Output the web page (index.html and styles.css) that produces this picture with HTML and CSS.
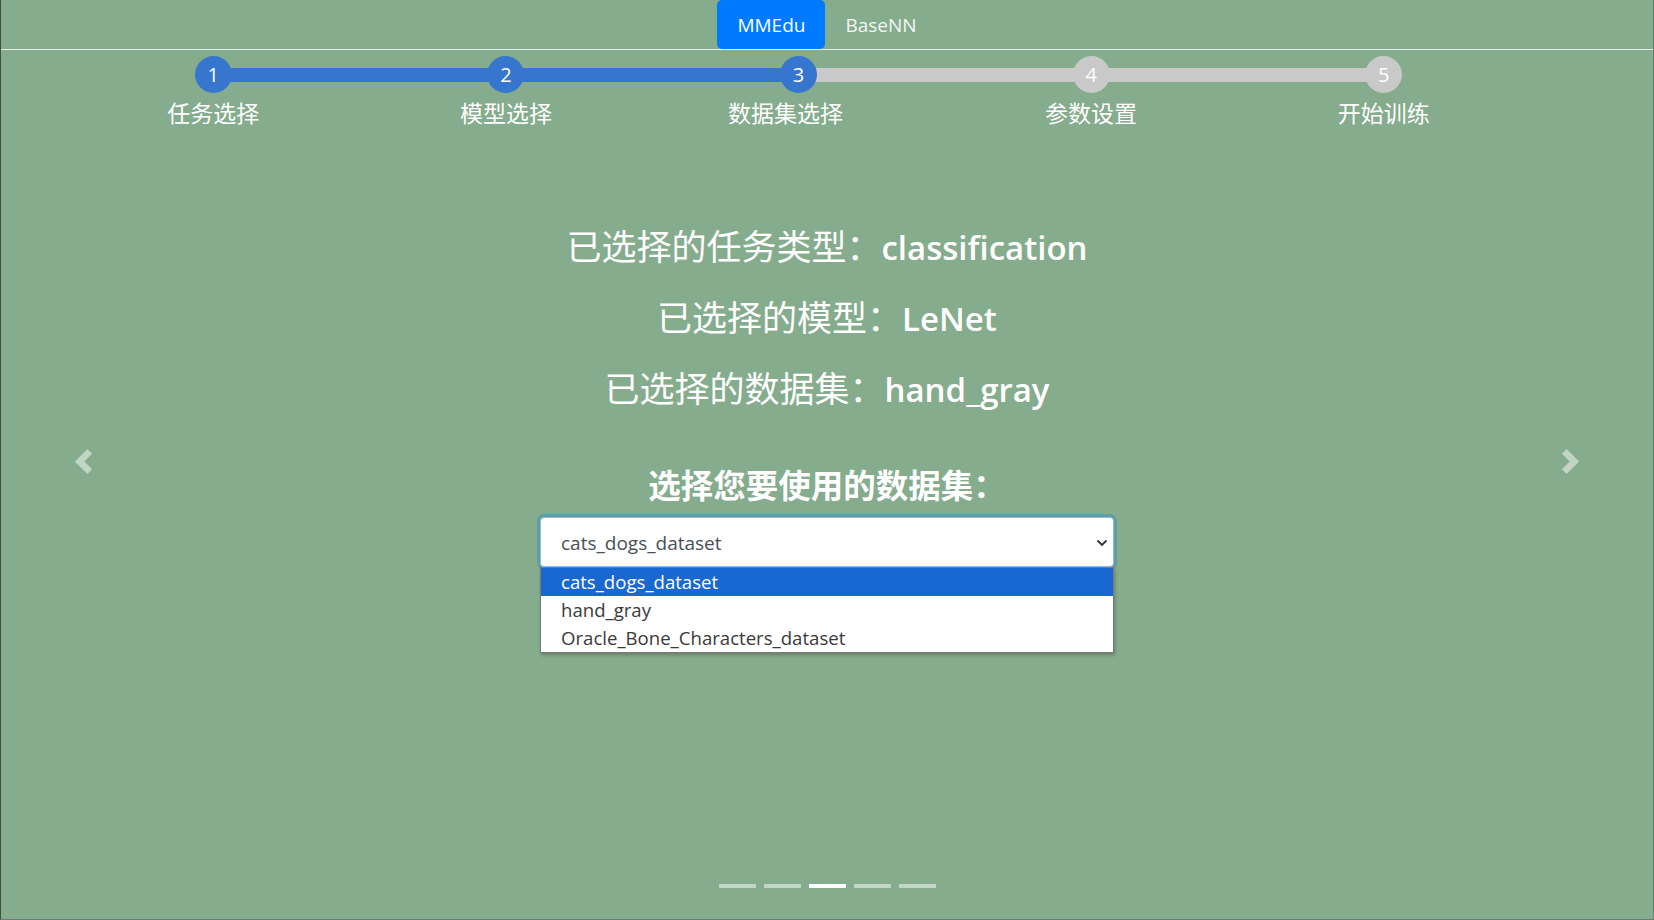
FILE: index.html
```html
<!DOCTYPE html>
<html lang="zh-CN">
<head>
<meta charset="utf-8">
<title>MMEdu</title>
<link rel="stylesheet" href="styles.css">
</head>
<body>
  <nav class="topnav">
    <a class="tab active">MMEdu</a>
    <a class="tab">BaseNN</a>
  </nav>

  <div class="carousel">
    <div class="stepper">
      <div class="step done"><span class="dot">1</span><span class="label">任务选择</span></div>
      <div class="step done"><span class="dot">2</span><span class="label">模型选择</span></div>
      <div class="step done"><span class="dot">3</span><span class="label label-shift">数据集选择</span></div>
      <div class="step"><span class="dot">4</span><span class="label">参数设置</span></div>
      <div class="step"><span class="dot">5</span><span class="label">开始训练</span></div>
    </div>

    <div class="slide">
      <div class="info">
        <p class="info-line">已选择的任务类型：<b>classification</b></p>
        <p class="info-line">已选择的模型：<b>LeNet</b></p>
        <p class="info-line">已选择的数据集：<b>hand_gray</b></p>
      </div>
      <h3 class="pick-title">选择您要使用的数据集：</h3>
      <div class="picker">
        <div class="select">
          <span class="select-value">cats_dogs_dataset</span>
          <svg class="caret" width="12" height="8" viewBox="0 0 12 8"><path d="M1.5 1.5 L6 6 L10.5 1.5" fill="none" stroke="#333" stroke-width="1.8"/></svg>
        </div>
        <ul class="options">
          <li class="opt selected">cats_dogs_dataset</li>
          <li class="opt">hand_gray</li>
          <li class="opt">Oracle_Bone_Characters_dataset</li>
        </ul>
      </div>
    </div>

    <a class="ctrl prev"><svg width="25" height="25" viewBox="0 0 8 8"><path d="M5.25 0l-4 4 4 4 1.5-1.5L4.25 4l2.5-2.5L5.25 0z" fill="#fff"/></svg></a>
    <a class="ctrl next"><svg width="25" height="25" viewBox="0 0 8 8"><path d="M2.75 0l-1.5 1.5L3.75 4l-2.5 2.5L2.75 8l4-4-4-4z" fill="#fff"/></svg></a>

    <ol class="indicators">
      <li></li>
      <li></li>
      <li class="active"></li>
      <li></li>
      <li></li>
    </ol>
  </div>
</body>
</html>
```

FILE: styles.css
```css
* { box-sizing: border-box; }

html, body {
  margin: 0;
  padding: 0;
}

body {
  width: 1654px;
  height: 920px;
  overflow: hidden;
  background: #85ac8c;
  font-family: "Open Sans", "Noto Sans CJK SC", sans-serif;
  color: #fff;
  display: flex;
  flex-direction: column;
  border-left: 1px solid #3f4f45;
  border-right: 1px solid #6b7d70;
  border-bottom: 1px solid #6b7d70;
}

.topnav {
  height: 50px;
  border-bottom: 1px solid #e4efe6;
  display: flex;
  justify-content: center;
  flex-shrink: 0;
}

.tab {
  display: flex;
  align-items: center;
  height: 49px;
  padding: 1px 20px 0;
  font-size: 19px;
  color: #f4f6f4;
  border-radius: 5px;
}

.tab.active {
  background: #007bff;
  color: #fff;
}

.carousel {
  position: relative;
  flex: 1;
  display: flex;
  flex-direction: column;
}

.stepper {
  margin-top: 6px;
  margin-left: 66px;
  width: 1463px;
  display: grid;
  grid-template-columns: repeat(5, 1fr);
}

.step {
  position: relative;
  display: flex;
  flex-direction: column;
  align-items: center;
}

.step + .step::before {
  content: "";
  position: absolute;
  top: 12px;
  left: -50%;
  width: 100%;
  height: 14px;
  background: #c9c9c9;
  z-index: 0;
}

.step.done + .step.done::before {
  background: #3776cf;
}

.dot {
  position: relative;
  z-index: 1;
  width: 37px;
  height: 37px;
  border-radius: 50%;
  background: #c9c9c9;
  color: #fff;
  font-size: 20px;
  line-height: 37px;
  text-align: center;
}

.step.done .dot {
  background: #3776cf;
}

.label {
  margin-top: 5px;
  font-size: 23px;
  line-height: 30px;
  white-space: nowrap;
}

.label-shift {
  margin-right: 26px;
}

.slide {
  display: flex;
  flex-direction: column;
  align-items: center;
}

.info {
  margin-top: 84px;
  text-align: center;
}

.info-line {
  margin: 0;
  font-size: 35px;
  line-height: 70px;
  white-space: nowrap;
}

.info-line b {
  font-size: 33px;
  font-weight: 600;
}

.pick-title {
  margin: 39px 0 0;
  font-size: 32.5px;
  line-height: 44px;
  font-weight: 700;
}

.picker {
  margin-top: 9px;
  width: 574px;
}

.select {
  height: 50px;
  background: #fff;
  border: 1px solid #80bdff;
  border-radius: 4px;
  box-shadow: 0 0 0 3px rgba(40, 130, 190, 0.35);
  display: flex;
  align-items: center;
  justify-content: space-between;
  padding: 2px 5px 0 20px;
  font-size: 19px;
  color: #495057;
}

.caret {
  display: block;
}

.options {
  list-style: none;
  margin: 0;
  padding: 0;
  background: #fff;
  border: 1px solid #7a7a7a;
  box-shadow: 1px 2px 3px rgba(0, 0, 0, 0.25);
}

.opt {
  height: 28px;
  line-height: 28px;
  padding-left: 20px;
  font-size: 18.6px;
  color: #3a3a3a;
}

.opt.selected {
  background: #1967d2;
  color: #fff;
}

.ctrl {
  position: absolute;
  top: 0;
  height: 822px;
  width: 10%;
  display: flex;
  align-items: center;
  justify-content: center;
  opacity: 0.5;
}

.ctrl.prev { left: 0; }
.ctrl.next { right: 0; }

.ctrl svg { display: block; }

.indicators {
  list-style: none;
  margin: auto 0 31px;
  padding: 0;
  display: flex;
  justify-content: center;
  gap: 8px;
}

.indicators li {
  width: 37px;
  height: 4px;
  background: #fff;
  opacity: 0.5;
}

.indicators li.active {
  opacity: 1;
}
```
